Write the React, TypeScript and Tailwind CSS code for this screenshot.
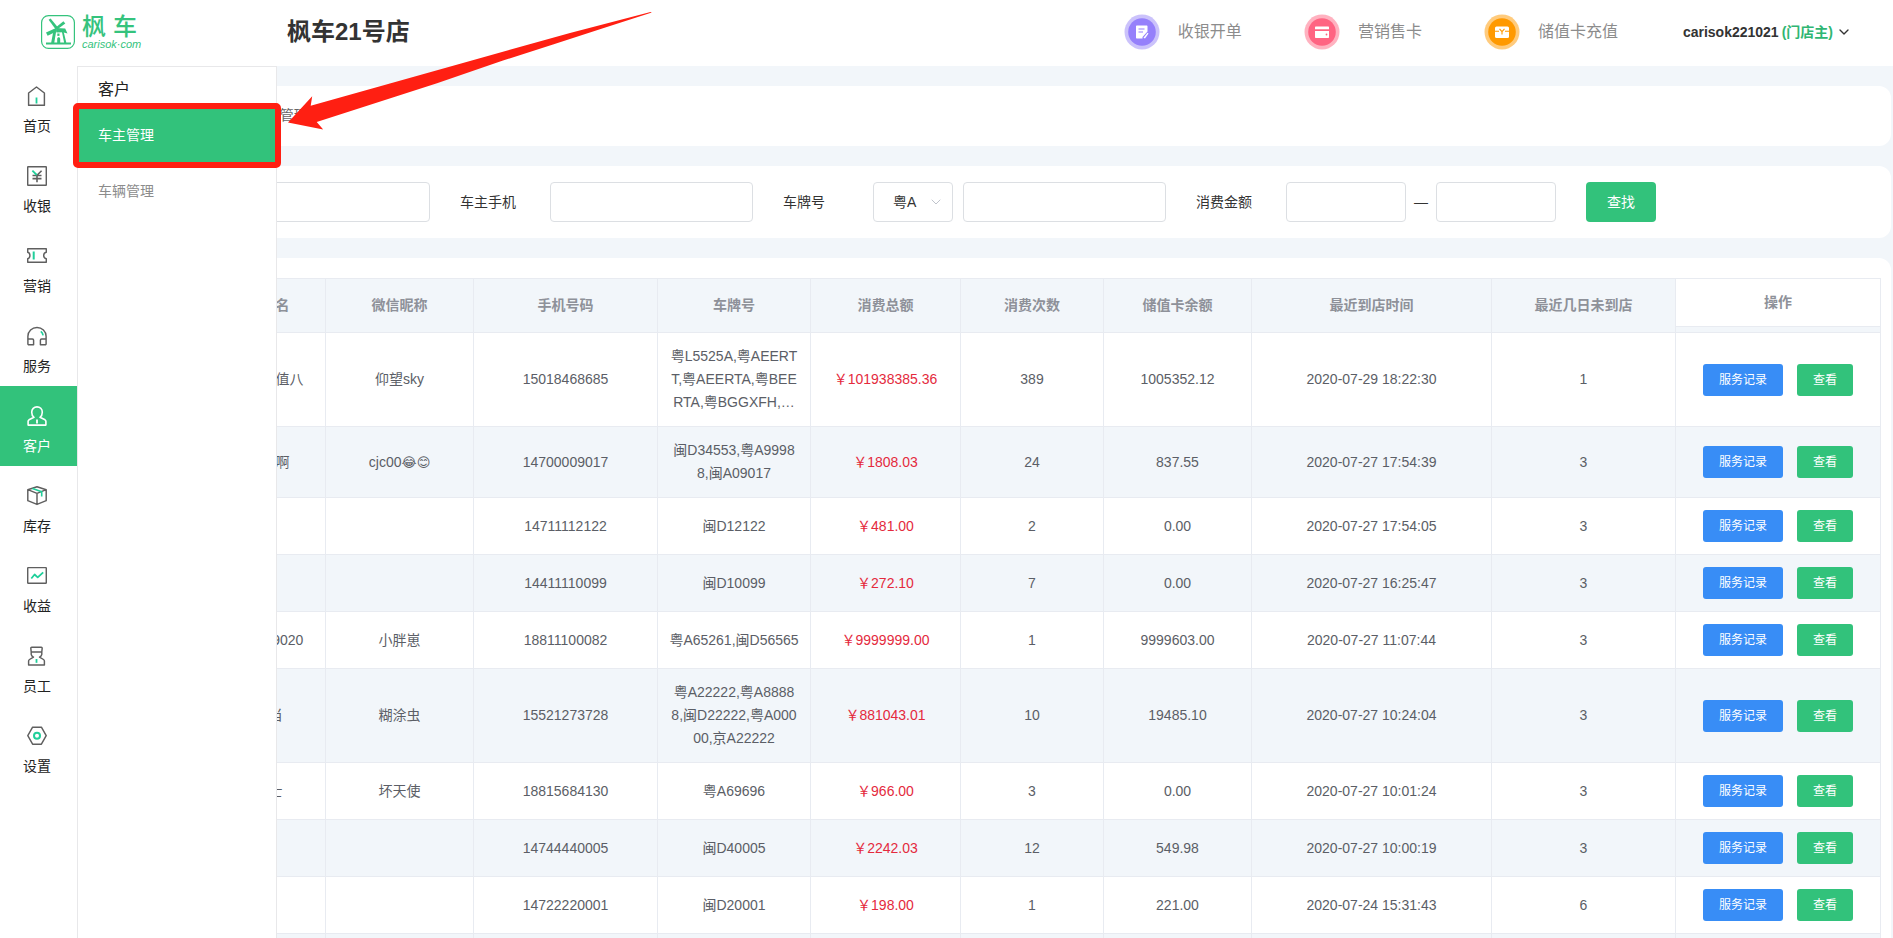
import React from "react";
import { ChevronDown } from "lucide-react";

const GREEN = "#1fcf9a";

function NavSvg({ children }: { children: React.ReactNode }) {
  return (
    <svg viewBox="0 0 20 20" className="size-5" fill="none" stroke="currentColor" strokeWidth="1.45" strokeLinejoin="round" aria-hidden="true">
      {children}
    </svg>
  );
}

const navItems: { label: string; icon: React.ReactNode }[] = [
  {
    label: "首页",
    icon: (
      <NavSvg>
        <path d="M9.5 1 1.6 7v12.3h15.8V7z" />
        <path d="M9.5 11.5v6" stroke={GREEN} strokeWidth="1.8" />
      </NavSvg>
    ),
  },
  {
    label: "收银",
    icon: (
      <NavSvg>
        <rect x=".7" y=".7" width="18.6" height="18.6" rx=".6" />
        <path d="M14.6 4.7 10 9.3v6.9M5.5 9.5h9M5.5 12.6h9" strokeWidth="1.6" />
        <path d="M5.4 4.7 9.8 9" stroke={GREEN} strokeWidth="1.8" />
      </NavSvg>
    ),
  },
  {
    label: "营销",
    icon: (
      <NavSvg>
        <path d="M.7 2.7h18.6v3.6c-1.8.4-2.6 1.600-2.600 3.200s.8 2.800 2.600 3.200v3.600H.7v-3.600c1.500-.4 2.200-1.600 2.200-3.200S2.200 6.700.7 6.300z" />
        <path d="M6.700 5.500v8" stroke={GREEN} strokeWidth="2" />
      </NavSvg>
    ),
  },
  {
    label: "服务",
    icon: (
      <NavSvg>
        <path d="M.9 18.700V10.300a9.100 8.800 0 0 1 18.200 0v8.400" />
        <path d="M.9 13h4.500c.8 0 1.200.4 1.200 1.200v4.500H.9M19.100 13h-4.500c-.8 0-1.200.4-1.200 1.200v4.500h5.700" />
        <path d="M13.800 5.400c1.300 1 2 2.200 2.300 4" stroke={GREEN} strokeWidth="1.700" />
      </NavSvg>
    ),
  },
  {
    label: "客户",
    icon: (
      <NavSvg>
        <path strokeWidth="1.600" d="M7 11.300C5.200 10 4.700 8.300 4.700 6.200 4.700 3 7 .9 10 .9s5.300 2.100 5.300 5.300c0 2.100-.5 3.800-2.300 5.100l5 2.500c.6.400.9.800.9 1.500v3.800H1.100v-3.800c0-.7.3-1.100.9-1.500z" />
        <path d="M10 13.400v4" strokeWidth="1.800" />
      </NavSvg>
    ),
  },
  {
    label: "库存",
    icon: (
      <NavSvg>
        <path d="M10 .7.8 3.700v11L10 18.400l9.200-3.700v-11zM.8 3.700 10 7.400l9.200-3.700M10 7.400v11" />
        <path d="m5.500 2.400 9.200 3.400v4.700" stroke={GREEN} strokeWidth="1.600" />
      </NavSvg>
    ),
  },
  {
    label: "收益",
    icon: (
      <NavSvg>
        <rect x=".7" y="1.600" width="18.600" height="15.700" rx=".6" />
        <path d="m4.300 12.500 3.300-4 3.100 2.900 5.500-5" stroke={GREEN} strokeWidth="1.800" />
      </NavSvg>
    ),
  },
  {
    label: "员工",
    icon: (
      <NavSvg>
        <path d="M4.200 5.900 3.800 2.200c0-.6.3-.9.900-.9h9.600c.6 0 .9.300.9.900l-.4 3.700zM4.200 5.900v2.500c.2 1.400 1 2.200 2.300 2.700l-4 2.400c-.6.400-.9.800-.9 1.500v4h15.800v-4c0-.7-.3-1.100-.9-1.500l-4-2.400c1.300-.5 2.100-1.300 2.300-2.700V5.900" />
        <path d="M9.500 13v3.800" stroke={GREEN} strokeWidth="1.800" />
      </NavSvg>
    ),
  },
  {
    label: "设置",
    icon: (
      <NavSvg>
        <path d="M.8 9.700 5.600 1.200h8.800l4.800 8.500-4.800 8.500H5.600z" />
        <circle cx="10" cy="9.700" r="3" stroke={GREEN} strokeWidth="2" />
      </NavSvg>
    ),
  },
];

function Logo() {
  return (
    <a href="#" aria-label="枫车 carisok·com" className="flex w-[246px] items-center gap-[7px] text-[#35c37d]">
      <svg viewBox="0 0 34 34" className="size-[34px]" fill="none" aria-hidden="true">
        <rect x=".6" y=".6" width="32.800" height="32.800" rx="7" stroke="currentColor" strokeWidth="1.200" />
        <g fill="currentColor">
          <path d="M7.600 4.800 9.600 3.400 17 12.400 14.800 14.400z" />
          <path d="M15 12.200 22.400 6.200l1.900 2.200-7.800 5.800z" />
          <path d="M15 13 5 17.500l1.600 3.300 9.400-4.600z" />
          <path d="m15 13 9.200.6 2.300 4.900-4.500-1.300-6.600.2z" />
          <path d="M12.200 17 10.200 27.600H5v2h25v-2h-4.700L22.600 16.500l-1.700.3 2.200 10.800h-3.900v-3.700c0-2.100-3-2.100-3 0v3.700h-2.900L15.200 16z" />
          <path d="M16.300 18.500h2.200v2.400h-2.200z" />
        </g>
      </svg>
      <span className="flex flex-col">
        <span className="flex gap-[7px] text-2xl leading-6 font-medium">
          <span>枫</span>
          <span>车</span>
        </span>
        <span className="text-[11px] leading-[11px] italic">carisok·com</span>
      </span>
    </a>
  );
}

function ReceiptIcon() {
  return (
    <svg viewBox="0 0 36 36" className="size-9" aria-hidden="true">
      <circle cx="18" cy="18" r="17.500" fill="#cbc2fb" />
      <circle cx="18" cy="18" r="13.800" fill="#9580fb" />
      <path d="M13 11.500h9.500c.6 0 1 .4 1 1v5l-5 5.500v1.500h-5.500c-.6 0-1-.4-1-1v-11c0-.6.400-1 1-1z" fill="#fff" />
      <path d="M14.500 15h6M14.500 18h4.500" stroke="#9580fb" strokeWidth="1.200" />
      <path d="m19.500 23.800 4-5 1 .8-3.500 4.900z" fill="#fff" />
    </svg>
  );
}

function CardIcon() {
  return (
    <svg viewBox="0 0 36 36" className="size-9" aria-hidden="true">
      <circle cx="18" cy="18" r="17.500" fill="#ffb2c0" />
      <circle cx="18" cy="18" r="13.800" fill="#ff6482" />
      <path d="M12 12.500h12c.6 0 1 .4 1 1v1.700H11v-1.700c0-.6.400-1 1-1z" fill="#fff" />
      <path d="M11 17h14v6c0 .6-.4 1-1 1H12c-.6 0-1-.4-1-1z" fill="#fff" />
      <circle cx="22.500" cy="20.500" r=".9" fill="#ff6482" />
    </svg>
  );
}

function RechargeIcon() {
  return (
    <svg viewBox="0 0 36 36" className="size-9" aria-hidden="true">
      <circle cx="18" cy="18" r="17.500" fill="#ffcb7d" />
      <circle cx="18" cy="18" r="13.800" fill="#ff9900" />
      <rect x="11" y="12.500" width="14" height="11.500" rx="1.500" fill="#fff" />
      <path d="M11 17.300h4m6 0h4M15.500 14.800 18 17.600l2.500-2.800M18 17.500v3" stroke="#ff9900" strokeWidth="1.100" fill="none" />
    </svg>
  );
}

const shortcuts = [
  { label: "收银开单", icon: <ReceiptIcon /> },
  { label: "营销售卡", icon: <CardIcon /> },
  { label: "储值卡充值", icon: <RechargeIcon /> },
];

type Row = {
  name: string;
  nick: React.ReactNode;
  phone: string;
  plates: string[];
  total: string;
  times: string;
  balance: string;
  last: string;
  days: string;
};

const rows: Row[] = [
  { name: "会员充值值八", nick: "仰望sky", phone: "15018468685", plates: ["粤L5525A,粤AEERT", "T,粤AEERTA,粤BEE", "RTA,粤BGGXFH,…"], total: "101938385.36", times: "389", balance: "1005352.12", last: "2020-07-29 18:22:30", days: "1" },
  {
    name: "你好啊啊",
    nick: (
      <>
        cjc00<span className="font-['DejaVu_Sans',sans-serif] text-[13px] leading-none">😂😊</span>
      </>
    ),
    phone: "14700009017", plates: ["闽D34553,粤A9998", "8,闽A09017"], total: "1808.03", times: "24", balance: "837.55", last: "2020-07-27 17:54:39", days: "3",
  },
  { name: "", nick: "", phone: "14711112122", plates: ["闽D12122"], total: "481.00", times: "2", balance: "0.00", last: "2020-07-27 17:54:05", days: "3" },
  { name: "", nick: "", phone: "14411110099", plates: ["闽D10099"], total: "272.10", times: "7", balance: "0.00", last: "2020-07-27 16:25:47", days: "3" },
  { name: "18811109020", nick: "小胖崽", phone: "18811100082", plates: ["粤A65261,闽D56565"], total: "9999999.00", times: "1", balance: "9999603.00", last: "2020-07-27 11:07:44", days: "3" },
  { name: "小叮当", nick: "糊涂虫", phone: "15521273728", plates: ["粤A22222,粤A8888", "8,闽D22222,粤A000", "00,京A22222"], total: "881043.01", times: "10", balance: "19485.10", last: "2020-07-27 10:24:04", days: "3" },
  { name: "李女士", nick: "坏天使", phone: "18815684130", plates: ["粤A69696"], total: "966.00", times: "3", balance: "0.00", last: "2020-07-27 10:01:24", days: "3" },
  { name: "", nick: "", phone: "14744440005", plates: ["闽D40005"], total: "2242.03", times: "12", balance: "549.98", last: "2020-07-27 10:00:19", days: "3" },
  { name: "", nick: "", phone: "14722220001", plates: ["闽D20001"], total: "198.00", times: "1", balance: "221.00", last: "2020-07-24 15:31:43", days: "6" },
];

const headers = ["序号", "车主姓名", "微信昵称", "手机号码", "车牌号", "消费总额", "消费次数", "储值卡余额", "最近到店时间", "最近几日未到店"];

const cell = "border-r border-b border-[#e8ebf1] px-0 py-3";
const field = "h-10 rounded-[4px] border border-[#dcdfe3] bg-white px-3 outline-none";

function OwnerTable() {
  return (
    <div className="overflow-hidden border-t border-l border-[#e8ebf1]">
      <table className="w-full table-fixed border-separate border-spacing-0 text-center text-sm leading-[23px] text-[#5b5e66]">
        <colgroup>
          <col className="w-[90px]" />
          <col className="w-[128px]" />
          <col className="w-[148px]" />
          <col className="w-[184px]" />
          <col className="w-[153px]" />
          <col className="w-[150px]" />
          <col className="w-[143px]" />
          <col className="w-[148px]" />
          <col className="w-[240px]" />
          <col className="w-[184px]" />
          <col className="w-[205px]" />
        </colgroup>
        <thead>
          <tr className="h-[54px] bg-[#f2f6fa] text-[#8e9199]">
            {headers.map((h) => (
              <th key={h} scope="col" className="border-r border-b border-[#e8ebf1] p-0 font-bold">
                {h}
              </th>
            ))}
            <th scope="col" className="border-r border-b border-[#e8ebf1] p-0 align-top font-bold">
              <div className="h-12 border-b border-[#e8ebf1] bg-white leading-[46px]">操作</div>
            </th>
          </tr>
        </thead>
        <tbody>
          {rows.map((r, i) => (
            <tr key={r.phone} className="odd:bg-white even:bg-[#f2f6fa]">
              <td className={cell}>{i + 1}</td>
              <td className={cell}>{r.name}</td>
              <td className={cell}>{r.nick}</td>
              <td className={cell}>{r.phone}</td>
              <td className={cell}>
                {r.plates.map((p) => (
                  <div key={p} className="whitespace-nowrap">{p}</div>
                ))}
              </td>
              <td className={`${cell} text-[#e42a3d]`}>￥{r.total}</td>
              <td className={cell}>{r.times}</td>
              <td className={cell}>{r.balance}</td>
              <td className={cell}>{r.last}</td>
              <td className={cell}>{r.days}</td>
              <td className={cell}>
                <div className="flex justify-center gap-[14px]">
                  <button type="button" className="h-8 rounded-[3px] bg-[#388df6] px-4 text-xs text-white">服务记录</button>
                  <button type="button" className="h-8 rounded-[3px] bg-[#32c27b] px-4 text-xs text-white">查看</button>
                </div>
              </td>
            </tr>
          ))}
          <tr className="h-14 bg-[#f2f6fa]">
            {[...headers, "操作"].map((h) => (
              <td key={h} className={cell} />
            ))}
          </tr>
        </tbody>
      </table>
    </div>
  );
}

export default function App() {
  return (
    <div className="relative flex h-screen flex-col overflow-hidden bg-[#f2f6fa] font-['Liberation_Sans','Noto_Sans_CJK_SC',sans-serif] text-sm text-[#333]">
      <header className="flex h-[66px] shrink-0 items-center bg-white pr-[41px] pb-[2px] pl-[41px]">
        <Logo />
        <h1 className="text-2xl font-bold">枫车21号店</h1>
        <div className="ml-auto flex items-center gap-[65px]">
          <div className="flex items-center gap-[62px]">
            {shortcuts.map((s) => (
              <a key={s.label} href="#" className="flex items-center gap-[18px] text-base text-[#8c8c8c]">
                {s.icon}
                {s.label}
              </a>
            ))}
          </div>
          <button type="button" className="flex items-center gap-[3px] font-bold">
            carisok221021 <span className="text-[#2fb673]">(门店主)</span>
            <ChevronDown className="size-4" strokeWidth={2} />
          </button>
        </div>
      </header>

      <div className="relative flex min-h-0 flex-1">
        <nav className="w-[77px] shrink-0 bg-white">
          {navItems.map((n) => (
            <a
              key={n.label}
              href="#"
              className={
                n.label === "客户"
                  ? "flex h-20 flex-col items-center gap-[10px] bg-[#32c27b] pt-5 pr-[3px] leading-5 text-white"
                  : "flex h-20 flex-col items-center gap-[10px] pt-5 pr-[3px] leading-5 text-[#222]"
              }
            >
              <span className={n.label === "客户" ? "text-white" : "text-[#5f5f5f]"}>{n.icon}</span>
              {n.label}
            </a>
          ))}
        </nav>

        <main className="flex min-w-0 flex-1 flex-col gap-5 pt-5 pr-[2px] pl-5">
          <div className="flex h-[60px] shrink-0 items-center gap-[18px] rounded-xl bg-white pb-[2px] pl-[19px] text-[#666]">
            <a href="#">首页</a>
            <span>/</span>
            <a href="#">客户</a>
            <span>/</span>
            <span>车主管理</span>
          </div>

          <form className="flex h-[72px] shrink-0 items-center rounded-xl bg-white pl-10" onSubmit={(e) => e.preventDefault()}>
            <label htmlFor="owner-name" className="w-[90px]">车主姓名</label>
            <input id="owner-name" className={`${field} mr-[30px] w-[203px]`} />
            <label htmlFor="owner-phone" className="w-[90px]">车主手机</label>
            <input id="owner-phone" className={`${field} mr-[30px] w-[203px]`} />
            <label htmlFor="plate" className="w-[90px]">车牌号</label>
            <span className="relative mr-[10px]">
              <select aria-label="车牌前缀" className="h-10 w-20 appearance-none rounded-[4px] border border-[#dcdfe3] bg-white pl-[19px] outline-none">
                <option>粤A</option>
              </select>
              <ChevronDown className="pointer-events-none absolute top-3 right-[9px] size-4 text-[#c0c4cc]" strokeWidth={1.5} />
            </span>
            <input id="plate" className={`${field} mr-[30px] w-[203px]`} />
            <label htmlFor="amount-min" className="w-[90px]">消费金额</label>
            <input id="amount-min" className={`${field} w-[120px]`} />
            <span className="w-[30px] text-center">—</span>
            <input aria-label="消费金额上限" className={`${field} mr-[30px] w-[120px]`} />
            <button type="submit" className="h-10 w-[70px] rounded-[4px] bg-[#32c27b] text-white">查找</button>
          </form>

          <section className="shrink-0 rounded-xl bg-white px-[10px] pt-5">
            <OwnerTable />
          </section>
        </main>

        <aside className="absolute inset-y-0 left-[77px] w-[200px] border border-b-0 border-[#e8e8ea] bg-white">
          <h2 className="h-10 pt-[11px] pl-5 text-base leading-6 text-[#222]">客户</h2>
          <a href="#" className="flex h-14 items-center bg-[#32c27b] pl-5 text-white">车主管理</a>
          <a href="#" className="flex h-14 items-center pl-5 text-[#8c8c8c]">车辆管理</a>
        </aside>
      </div>

      <div className="pointer-events-none absolute top-[103px] left-[73px] h-[65px] w-[208px] rounded-[5px] border-6 border-[#ff1f12]" />
      <svg className="pointer-events-none absolute top-[10px] left-[286px] h-[122px] w-[368px]" viewBox="286 10 368 122" aria-hidden="true">
        <path d="M288 122.500 312.200 96.300 310.700 105.700 470 61 570 33 650.500 12 651.800 12.600 603 28.300 553 44.500 503 60.500 437 83.300 316.700 122 323.200 129.500z" fill="#ff1f12" />
      </svg>
    </div>
  );
}
